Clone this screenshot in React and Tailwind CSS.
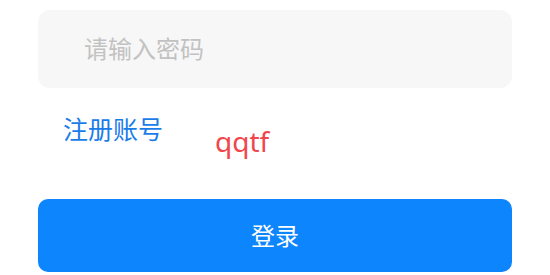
export default function App() {
  return (
    <div
      className="w-[550px] h-[275px] bg-white px-[38px] pt-[10px] overflow-hidden"
      style={{ fontFamily: '"Noto Sans", "Noto Sans CJK SC", sans-serif' }}
    >
      <div className="h-[78px] rounded-[12px] bg-[#f7f7f7] flex items-center pl-[46px] text-[24px] text-[#c2c2c2]">
        请输入密码
      </div>
      <div className="flex items-start mt-[25px]">
        <span className="ml-[25px] text-[25px] leading-[32px] text-[#1a7ce9]">注册账号</span>
        <span className="ml-[52px] mt-[10px] text-[28px] leading-[36px] text-[#f0464c]">qqtf</span>
      </div>
      <div className="mt-[40px] h-[73px] rounded-[10px] bg-[#0d85fc] flex items-center justify-center text-white text-[24px]">
        登录
      </div>
    </div>
  );
}
